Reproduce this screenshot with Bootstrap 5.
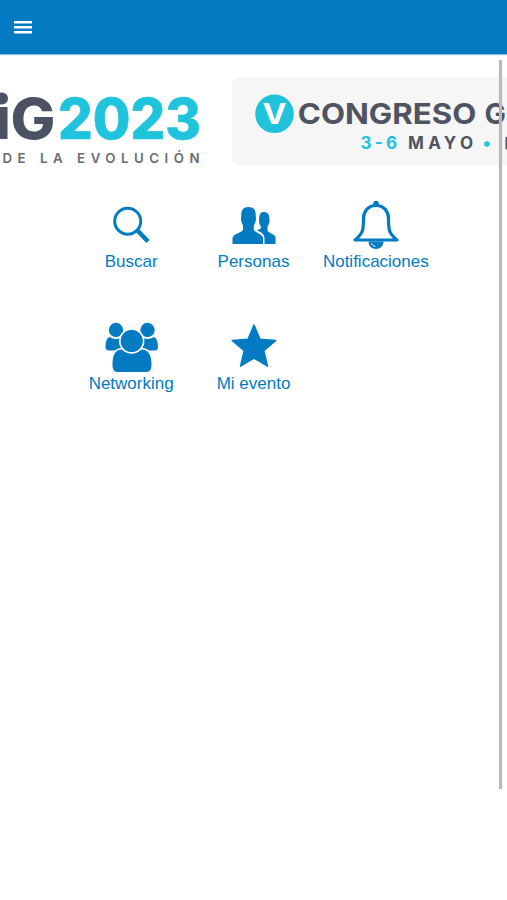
<!DOCTYPE html>
<html lang="es">
<head>
<meta charset="utf-8">
<meta name="viewport" content="width=device-width, initial-scale=1">
<title>Evento</title>
<link href="https://cdn.jsdelivr.net/npm/bootstrap@5.3.0/dist/css/bootstrap.min.css" rel="stylesheet">
<style>
:root { --brand: #027bc2; }
body { font-family: "Liberation Sans", Arial, sans-serif; height: 900px; overflow: hidden; background: #fff; }
.topbar { height: 54px; background: var(--brand); padding: 0 13px; box-shadow: 0 1px 1px #8fc3e2; z-index: 1; }
.menu-btn { line-height: 0; }
.banner { height: 126px; overflow: hidden; }
.banner text { font-family: Inter, sans-serif; }
.tiles { width: 367px; margin-left: 70px; margin-top: 16px; }
.tile { height: 122px; color: var(--brand); font-size: 17px; line-height: 20px; }
.tile svg { width: 60px; height: 56px; display: block; }
.tile:hover { color: var(--brand); }
.scroll-thumb { position: absolute; right: 5px; top: 60px; width: 3px; height: 729px; background: #b9b9b9; box-shadow: 0 0 1px #bbb; }
</style>
</head>
<body class="position-relative">
<nav class="topbar d-flex align-items-center position-relative">
  <button class="menu-btn btn p-0 border-0 rounded-0" aria-label="Menú">
    <svg width="20" height="14" fill="#fff"><path d="M1 1h18v2.500H1zM1 6h18v2.500H1zM1 11h18v2.500H1z"/></svg>
  </button>
</nav>
<header class="banner">
  <svg class="d-block" width="507" height="126" viewBox="0 54 507 126">
    <g font-weight="800" font-size="56">
      <rect x="-6" y="107" width="13.500" height="32" fill="#4a5263"/>
      <circle cx="2" cy="98.500" r="6" fill="#4a5263"/>
      <text x="10.500" y="139" fill="#4a5263" textLength="45" lengthAdjust="spacingAndGlyphs">G</text>
      <text x="58" y="139" fill="#1fc4dc" stroke="#1fc4dc" stroke-width=".6" textLength="143" lengthAdjust="spacingAndGlyphs">2023</text>
    </g>
    <text x="2.500" y="163" font-size="13.500" font-weight="600" fill="#6a6a70" textLength="201" transform="translate(.1 0) scale(.98 1)">DE LA EVOLUCIÓN</text>
    <rect x="232" y="77.500" width="300" height="87.500" rx="7" fill="#f6f6f6"/>
    <circle cx="274.500" cy="113.800" r="19.300" fill="#1fc4dc"/>
    <text x="262.500" y="124" font-size="29" font-weight="700" fill="#fff" textLength="24" lengthAdjust="spacingAndGlyphs">V</text>
    <g font-size="28.500" font-weight="700" fill="#4f5362">
      <text x="297.800" y="124" textLength="178.500" lengthAdjust="spacingAndGlyphs">CONGRESO</text>
      <text x="484.500" y="124">G</text>
    </g>
    <g font-size="17" font-weight="700">
      <text x="360.500" y="149.300" fill="#1fc4dc" textLength="36.500">3-6</text>
      <text x="408" y="149.300" fill="#4f5362" textLength="65">MAYO</text>
      <circle cx="487" cy="144" r="2.800" fill="#1fc4dc"/>
      <rect x="505.500" y="137" width="3" height="12.300" fill="#4f5362"/>
    </g>
  </svg>
</header>
<main class="tiles">
  <div class="row row-cols-3 g-0">
    <a class="tile col d-flex flex-column align-items-center text-decoration-none" href="#">
      <svg viewBox="101 196 60 56" fill="none" stroke="currentColor"><circle cx="127.700" cy="221.200" r="13" stroke-width="3"/><path d="M137.500 230.500l10.500 11" stroke-width="4.500"/></svg>
      <span>Buscar</span>
    </a>
    <a class="tile col d-flex flex-column align-items-center text-decoration-none" href="#">
      <svg viewBox="223 196 60 56" fill="currentColor"><path d="M263.500 212c4 0 6 2.500 5.800 6.500l.2 3c0 1.500-1.200 3.500-2 5.500v3.500c1 2.500 7.800 3.500 8 7V244h-11v-5c0-5-2.500-6.500-7.500-8.500l3.800-2v-2c-1.200-2-1.800-3.500-1.800-5l.2-3c0-4 1.500-6.500 4.300-6.500z"/><path d="M248.500 207c5.500 0 7.300 3 7.200 8l.3 4c0 2-1.200 4.500-2.200 6.500v4.500c2 3 9.200 4 9.200 8.500V244h-30.500v-5.500c0-4.500 8.500-5.500 10.500-8.500v-4.500c-1-2-2-4.500-2-6.500l.3-4c0-5 2-8 7.200-8z" stroke="#fff" stroke-width="2" paint-order="stroke"/></svg>
      <span>Personas</span>
    </a>
    <a class="tile col d-flex flex-column align-items-center text-decoration-none" href="#">
      <svg viewBox="346 196 60 56"><circle cx="376" cy="203.500" r="2.800" fill="currentColor"/><path d="M376 205.300c-8 0-12.500 6-12.500 13 0 12-.5 15-8.500 21.500h42c-8-6.500-8.500-9.500-8.500-21.500 0-7-4.500-13-12.500-13z" transform="translate(0 .2)" fill="#fff" stroke="currentColor" stroke-width="3.200" stroke-linejoin="round"/><path d="M368.500 241.500h15c0 4.500-3.200 7.500-7.500 7.500s-7.500-3-7.500-7.500z" fill="currentColor"/><path d="M371.500 243c.5 2 2 3.200 4 3.400" fill="none" stroke="#fff" stroke-width="1"/></svg>
      <span>Notificaciones</span>
    </a>
    <a class="tile col d-flex flex-column align-items-center text-decoration-none" href="#">
      <svg viewBox="101 318 60 56" fill="currentColor"><circle cx="116" cy="330" r="7.200"/><circle cx="147.500" cy="330" r="7.200"/><path d="M109.500 337q6.500 4 13 0h7v13.500h-20c-3 0-4-1-4-3.500 0-5 1.300-9 4-10zM154 337q-6.500 4-13 0h-7v13.500h20c3 0 4-1 4-3.500 0-5-1.300-9-4-10z"/><path d="M122 349.500q9.700 7 19.500 0c7 0 10 6 10 15 0 5-1.500 7.500-5.500 7.500h-28c-4 0-5.500-2.500-5.500-7.500 0-9 2.500-15 9.500-15z" stroke="#fff" stroke-width="3" paint-order="stroke"/><circle cx="131.700" cy="341" r="11" stroke="#fff" stroke-width="3.400" paint-order="stroke"/><circle cx="131.700" cy="341" r="10.800"/></svg>
      <span>Networking</span>
    </a>
    <a class="tile col d-flex flex-column align-items-center text-decoration-none" href="#">
      <svg viewBox="223 318 60 56" fill="currentColor" stroke="currentColor" stroke-width="1.500" stroke-linejoin="round"><path d="M254 325l6 14.300 15.800 1.200-12 10.200 3.700 15.500-13.500-8-13.500 8 3.700-15.500-12-10.200 15.800-1.200z"/></svg>
      <span>Mi evento</span>
    </a>
  </div>
</main>
<div class="scroll-thumb"></div>
<script src="https://cdn.jsdelivr.net/npm/bootstrap@5.3.0/dist/js/bootstrap.bundle.min.js"></script>
</body>
</html>
